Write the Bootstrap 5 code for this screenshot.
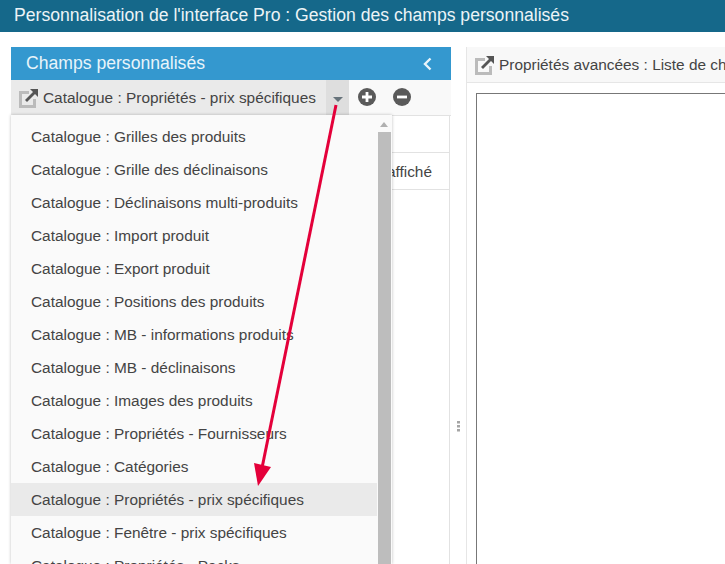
<!DOCTYPE html>
<html lang="fr">
<head>
<meta charset="utf-8">
<title>Champs personnalisés</title>
<link href="https://cdn.jsdelivr.net/npm/bootstrap@5.3.0/dist/css/bootstrap.min.css" rel="stylesheet">
<style>
html,body{height:564px;overflow:hidden;background:#fff;font-family:"Liberation Sans",Arial,sans-serif;color:#444}
.top-bar{height:32px;background:#15688a;color:#ecf4f7;font-size:17.6px;padding-left:14px;line-height:30px;white-space:nowrap}
.work{height:532px;padding:15px 0 0 11px}
.left-pane{width:440px;position:relative}
.pane-head{height:33px;background:#3498cf;color:#e8f4fa;font-size:17.6px;padding:0 19px 0 15px}
.tool-row{height:36px;background:#f9f9f9;border-bottom:1px solid #e2e2e2}
.select-box{width:338px;height:35px;background:#eaeaea;padding-left:8px;font-size:15.4px;color:#444}
.select-box span:first-of-type{padding-top:1px}
.select-arrow{width:23px;background:#dedede}
.select-arrow i{display:block;border:5px solid transparent;border-top:5px solid #67737b;border-bottom:0;width:0;height:0;margin-top:3px}
.tbl-area{height:459px;border-left:1px solid #e2e2e2;border-right:1px solid #e2e2e2;margin:0 1px 0 0;background:#fff}
.tbl-line{height:37px;border-bottom:1px solid #e2e2e2;font-size:15.4px;text-align:right;padding-right:17px;line-height:37px;color:#444}
.menu-list{position:absolute;left:0;top:68px;width:381px;height:449px;background:#fafafa;box-shadow:0 0 3px rgba(0,0,0,.25);overflow:hidden}
.menu-rows{width:366px;padding-top:5px}
.menu-one{height:33px;line-height:33px;padding-left:20px;font-size:15.4px;color:#444;white-space:nowrap}
.menu-one.is-on{background:#eaeaea}
.fake-scroll{position:absolute;top:0;right:0;width:14px;height:100%;background:#fafafa}
.fake-scroll b{display:block;position:absolute;top:17px;left:0;width:13px;bottom:0;background:#bdbdbd}
.fake-scroll i{position:absolute;top:7px;left:2px;width:0;height:0;border:4px solid transparent;border-bottom:5px solid #b0b0b0;border-top:0}
.split-bar{width:15px;color:#888}
.split-bar svg{display:block;margin-top:373px;margin-left:5px}
.right-pane{flex:1;min-width:0;border-left:1px solid #e6e6e6;overflow:hidden}
.right-head{height:36px;background:#f8f8f8;border-bottom:1px solid #e6e6e6;padding-left:8px;font-size:15.4px;color:#444;white-space:nowrap}
.right-box{margin:10px 0 0 9px;height:500px;border:1px solid #777;border-right:0;border-bottom:0}
.tool-icons{height:33px;margin-left:9px;gap:17px}
.red-arrow{position:absolute;left:0;top:0;pointer-events:none}
</style>
</head>
<body class="position-relative">
<div class="top-bar">Personnalisation de l'interface Pro : Gestion des champs personnalisés</div>
<div class="work d-flex">
  <div class="left-pane">
    <div class="pane-head d-flex align-items-center justify-content-between">
      <span>Champs personnalisés</span>
      <svg width="9" height="14" viewBox="0 0 9 14"><path d="M7.5 1.5 2 7l5.500 5.500" fill="none" stroke="#e8f4fa" stroke-width="2.400"/></svg>
    </div>
    <div class="tool-row d-flex align-items-start">
      <div class="select-box d-flex align-items-center">
        <svg width="20" height="20" viewBox="0 0 20 20" class="flex-shrink-0 me-1"><path d="M10 4.500H1.500v14h14V11" fill="none" stroke="#bbb" stroke-width="3"/><path d="M7 13 16 4" stroke="#555" stroke-width="2.800"/><path d="M11 1h8v8z" fill="#555"/></svg>
        <span class="flex-grow-1 text-nowrap">Catalogue : Propriétés - prix spécifiques</span>
        <span class="select-arrow h-100 d-flex align-items-center justify-content-center flex-shrink-0"><i></i></span>
      </div>
      <div class="tool-icons d-flex align-items-center">
        <svg width="18" height="18" viewBox="0 0 18 18"><circle cx="9" cy="9" r="9" fill="#5a5a5a"/><path d="M9 4v10M4 9h10" stroke="#fff" stroke-width="2.800"/></svg>
        <svg width="18" height="18" viewBox="0 0 18 18"><circle cx="9" cy="9" r="9" fill="#5a5a5a"/><path d="M4 9h10" stroke="#fff" stroke-width="2.800"/></svg>
      </div>
    </div>
    <div class="tbl-area">
      <div class="tbl-line"></div>
      <div class="tbl-line">affiché</div>
    </div>
    <div class="menu-list">
      <div class="menu-rows">
        <div class="menu-one">Catalogue : Grilles des produits</div>
        <div class="menu-one">Catalogue : Grille des déclinaisons</div>
        <div class="menu-one">Catalogue : Déclinaisons multi-produits</div>
        <div class="menu-one">Catalogue : Import produit</div>
        <div class="menu-one">Catalogue : Export produit</div>
        <div class="menu-one">Catalogue : Positions des produits</div>
        <div class="menu-one">Catalogue : MB - informations produits</div>
        <div class="menu-one">Catalogue : MB - déclinaisons</div>
        <div class="menu-one">Catalogue : Images des produits</div>
        <div class="menu-one">Catalogue : Propriétés - Fournisseurs</div>
        <div class="menu-one">Catalogue : Catégories</div>
        <div class="menu-one is-on">Catalogue : Propriétés - prix spécifiques</div>
        <div class="menu-one">Catalogue : Fenêtre - prix spécifiques</div>
        <div class="menu-one">Catalogue : Propriétés - Packs</div>
      </div>
      <div class="fake-scroll"><i></i><b></b></div>
    </div>
  </div>
  <div class="split-bar flex-shrink-0">
    <svg width="4" height="12" viewBox="0 0 4 12"><path d="M1 1h3v2.500H1zM1 5h3v2.500H1zM1 9h3v2.500H1z" fill="#a5a5a5"/></svg>
  </div>
  <div class="right-pane">
    <div class="right-head d-flex align-items-center">
      <svg width="20" height="20" viewBox="0 0 20 20" class="flex-shrink-0 me-1"><path d="M10 4.500H1.500v14h14V11" fill="none" stroke="#bbb" stroke-width="3"/><path d="M7 13 16 4" stroke="#555" stroke-width="2.800"/><path d="M11 1h8v8z" fill="#555"/></svg>
      <span>Propriétés avancées : Liste de champs</span>
    </div>
    <div class="right-box"></div>
  </div>
</div>
<svg class="red-arrow" width="725" height="564" viewBox="0 0 725 564"><path d="M336 105 262 468" stroke="#e4003a" stroke-width="3"/><path d="M254 463 271 467 258 486z" fill="#e4003a"/></svg>
</body>
</html>
